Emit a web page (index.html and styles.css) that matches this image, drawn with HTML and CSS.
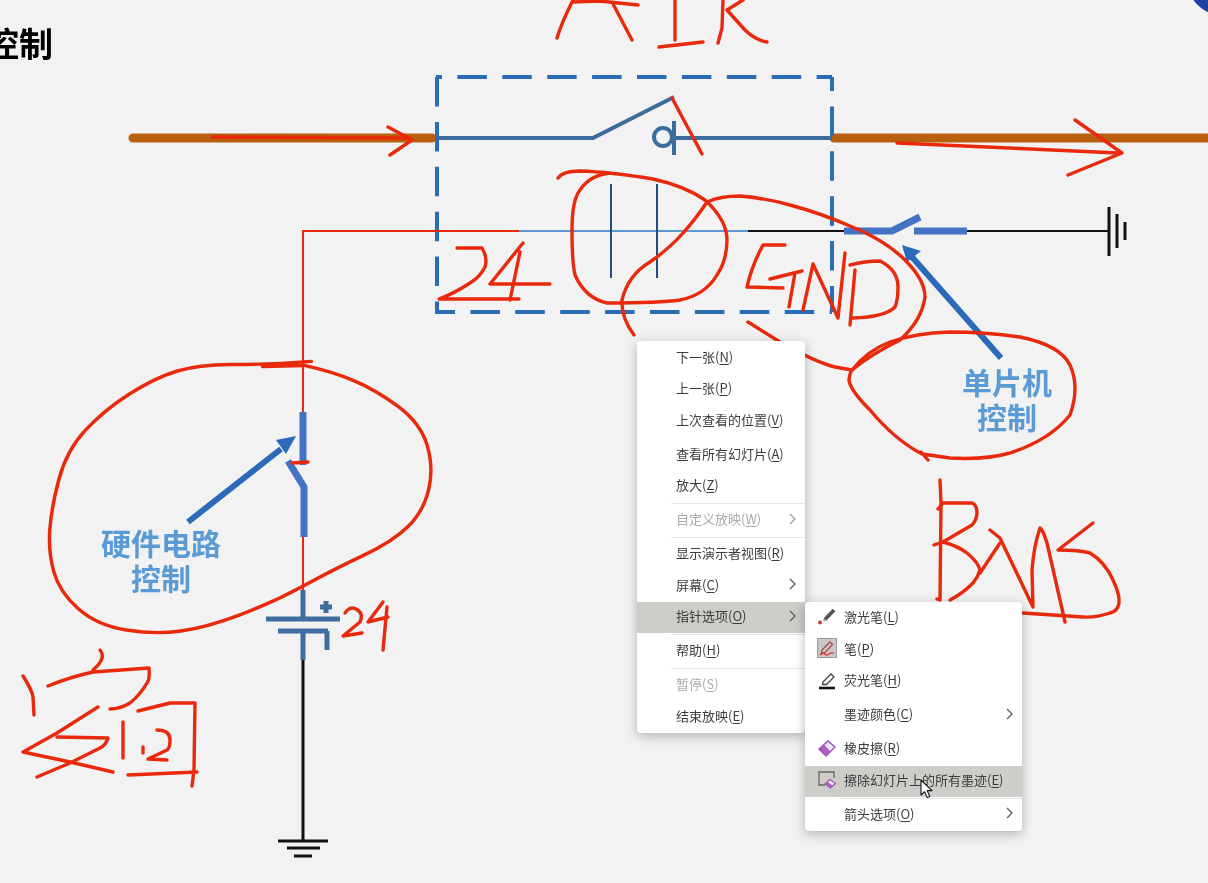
FILE: index.html
```html
<!DOCTYPE html>
<html lang="zh">
<head>
<meta charset="utf-8">
<title>控制</title>
<link rel="stylesheet" href="styles.css">
</head>
<body>
<main class="stage">
  <svg class="canvas" viewBox="0 0 1208 883" width="1208" height="883" aria-hidden="true">
    <circle class="corner" cx="1226" cy="-24" r="40.5"/>

    <path class="bus" d="M133 138H432M834 138H1208"/>
    <path class="dash dash-top" d="M436 77H832"/>
    <path class="dash dash-left" d="M437 77V312"/>
    <path class="dash dash-right" d="M832 77V312"/>
    <path class="dash dash-bottom" d="M435 312H832"/>

    <path class="main-wire" d="M436 138H593L674 97M674 138H832"/>
    <circle class="main-wire" cx="663" cy="137" r="9"/>
    <path class="main-wire thin-bar" d="M674 121V155"/>

    <path class="wire-blue" d="M519 231H748"/>
    <path class="plate" d="M611 184V278M657 184V278"/>
    <path class="wire-black" d="M748 231H845M967 231H1108"/>
    <path class="switch" d="M844 231H892L920 217M914 231H967"/>
    <path class="wire-black heavy" d="M1109 207V256M1117 214V248M1125 222V240"/>
    <path class="wire-red" d="M519 231H303V414M303 537V590"/>
    <path class="switch" d="M303 412V465M288 461L304 487V537"/>
    <path class="bat" d="M303 590V619M266 619H340M278 631H328M303 631V660M327 631V650M326 601V613M320 607H332"/>
    <path class="wire-black heavy" d="M303 660V841M278 841H328M287 848H320M294 856H312"/>

    <path class="pointer" d="M188 522L281 449"/>
    <path class="pointer-head" d="M296 436L276 440L286 454Z"/>
    <path class="pointer" d="M1001 358L912 257"/>
    <path class="pointer-head" d="M902 245L907 262L921 251Z"/>

    <g class="ink">
      <path d="M573 0C568 10 560 28 557 38M572 2L600 1L638 5M612 2L632 40"/>
      <path d="M675 0L675 40M659 47L703 42"/>
      <path d="M723 0L722 28L718 43M743 0L727 10L745 30Q755 40 767 42"/>

      <path d="M212 137L410 138M388 127L412 140L390 155"/>
      <path d="M897 143L1118 153M1075 120L1122 153L1068 175"/>
      <path d="M672 98L702 154"/>

      <path d="M457 248H482Q488 258 485 267Q480 277 470 283Q455 293 439 299H519"/>
      <path d="M523 243L490 284H550M520 252L510 300"/>

      <path d="M558 178Q563 171 580 171Q610 172 653 179Q685 186 705 200Q727 220 727 240Q727 260 717 275Q705 295 680 300Q660 303 607 303Q585 298 575 275Q572 262 572 230Q572 200 580 190Q590 175 610 173"/>
      <path d="M707 202Q720 196 740 196Q765 198 790 205Q820 213 850 226Q885 240 905 260Q925 280 925 297Q922 320 900 340Q870 355 852 370"/>
      <path d="M707 202Q695 220 683 233Q670 248 650 262Q628 275 622 300Q621 318 634 335"/>
      <path d="M748 322L780 342Q815 362 835 367L852 370"/>
      <path d="M852 370Q868 350 890 342Q915 333 950 332Q985 332 1020 337Q1060 345 1070 365Q1080 387 1070 415Q1050 440 1010 453Q985 460 950 458L922 454Q895 440 870 410Q850 390 849 380Q850 372 852 370M921 452L928 460"/>

      <path d="M785 245H763Q752 265 747 287L783 288M770 279L802 271M795 273L789 307"/>
      <path d="M803 310L813 264L838 318L845 253"/>
      <path d="M850 265Q865 261 880 261Q898 270 898 287Q898 300 895 307Q885 317 853 318M855 270L850 325"/>

      <path transform="translate(240 498) scale(1.02 1.012) translate(-240 -497)" d="M310 362L280 364Q260 365 230 365Q200 365 178.5 371.5Q157 378 132 394Q107 410 88.5 430Q70 450 62.5 478.5Q55 507 53.5 528.5Q52 550 57.5 570Q63 590 81.5 606.5Q100 623 128.5 627.5Q157 632 182 628.5Q207 625 240 612.5Q273 600 303 583.5Q333 567 361.5 553.5Q390 540 405 525Q420 510 425 488.5Q430 467 423.5 445Q417 423 395 406.5Q373 390 351.5 381Q330 372 303 366L262 367"/>
      <path d="M292 463L308 462"/>

      <path d="M345 613Q350 606 356 609Q364 613 360 622L343 636L362 633"/>
      <path d="M383 602L368 622L388 617M387 607L383 650"/>

      <path d="M23 676Q32 690 33 697L34 715"/>
      <path d="M100 650Q107 658 93 670"/>
      <path d="M48 686Q70 677 93 672L149 668Q150 680 147 683Q140 695 130 703Q120 709 110 709"/>
      <path d="M98 707L57 733L23 752L70 762L113 772"/>
      <path d="M57 737L108 738Q106 745 100 748L70 763L37 777"/>
      <path d="M123 722L123 758M143 747V753"/>
      <path d="M157 730Q170 730 170 740Q170 748 167 750L148 759L167 760"/>
      <path d="M138 711L170 703H195L194 770L192 786M128 775L197 772"/>

      <path d="M940 480L941 503L940 600L937 599"/>
      <path d="M938 509L943 503H972Q977 505 977 512Q977 520 972 525L943 542L934 545"/>
      <path d="M943 542Q958 546 967 553Q978 562 980 570Q978 577 973 583Q962 594 950 600"/>
      <path d="M990 530L1000 538L1033 607L1032 570Q1034 545 1040 528Q1043 530 1047 543L1065 622"/>
      <path d="M1000 543L980 573"/>
      <path d="M1093 523L1058 550Q1080 550 1090 553Q1105 562 1113 580Q1120 595 1119 603Q1118 611 1110 613Q1095 618 1083 617L1023 613"/>
    </g>
  </svg>

  <div class="title">控制</div>
  <div class="label label-hw">硬件电路<br>控制</div>
  <div class="label label-mcu">单片机<br>控制</div>

  <nav class="menu menu-main">
    <div class="item">下一张(<u>N</u>)</div>
    <div class="item">上一张(<u>P</u>)</div>
    <div class="item">上次查看的位置(<u>V</u>)</div>
    <div class="sep"></div>
    <div class="item">查看所有幻灯片(<u>A</u>)</div>
    <div class="item">放大(<u>Z</u>)</div>
    <div class="sep"></div>
    <div class="item off">自定义放映(<u>W</u>)<svg class="chev" viewBox="0 0 7 12"><path d="M1 1L6 6L1 11"/></svg></div>
    <div class="sep"></div>
    <div class="item">显示演示者视图(<u>R</u>)</div>
    <div class="item">屏幕(<u>C</u>)<svg class="chev" viewBox="0 0 7 12"><path d="M1 1L6 6L1 11"/></svg></div>
    <div class="item hot">指针选项(<u>O</u>)<svg class="chev" viewBox="0 0 7 12"><path d="M1 1L6 6L1 11"/></svg></div>
    <div class="sep"></div>
    <div class="item">帮助(<u>H</u>)</div>
    <div class="sep"></div>
    <div class="item off">暂停(<u>S</u>)</div>
    <div class="item">结束放映(<u>E</u>)</div>
  </nav>

  <nav class="menu menu-sub">
    <div class="item">
      <svg class="ico" viewBox="0 0 20 20"><circle cx="3" cy="15.5" r="1.9" fill="#c8372d"/><path d="M8 12.5L17 3" stroke="#555" stroke-width="3.8" fill="none"/><path d="M6.5 14L8 12.5" stroke="#999" stroke-width="1.8"/></svg>
      激光笔(<u>L</u>)
    </div>
    <div class="item">
      <svg class="ico" viewBox="0 0 20 20"><rect x=".5" y=".5" width="19" height="19" fill="#c9c7c5" stroke="#9a9a9a"/><path d="M5 12L13 4L15.5 6.5L8 14.5L4.5 15.5Z" fill="none" stroke="#a84a4c" stroke-width="1.3"/><path d="M3 17Q7 14 8 16T12 16T17 15.5" fill="none" stroke="#d8353a" stroke-width="1.4"/></svg>
      笔(<u>P</u>)
    </div>
    <div class="item">
      <svg class="ico" viewBox="0 0 20 20"><path d="M6 12L14 4L17 7L9.5 14.5H5.5Z" fill="none" stroke="#444" stroke-width="1.3"/><path d="M2 18H18" stroke="#111" stroke-width="2.6"/></svg>
      荧光笔(<u>H</u>)
    </div>
    <div class="sep"></div>
    <div class="item"><span class="ico"></span>墨迹颜色(<u>C</u>)<svg class="chev" viewBox="0 0 7 12"><path d="M1 1L6 6L1 11"/></svg></div>
    <div class="sep"></div>
    <div class="item">
      <svg class="ico" viewBox="0 0 20 20"><path d="M2 11L11 3L18 9L9 18Z" fill="#f0e2f4" stroke="#9c4fb5" stroke-width="1.4"/><path d="M2 11L7 6.5L13 13L9 18Z" fill="#a85fbe"/></svg>
      橡皮擦(<u>R</u>)
    </div>
    <div class="item hot">
      <svg class="ico" viewBox="0 0 20 20"><path d="M8 16H2V3H17V9" fill="none" stroke="#666" stroke-width="1.3"/><path d="M8 15L13 10.5L18.5 14.5L13.5 19Z" fill="#f4e8f6" stroke="#9c4fb5" stroke-width="1.2"/><path d="M8 15L10.5 12.8L16 17L13.5 19Z" fill="#a85fbe"/></svg>
      擦除幻灯片上的所有墨迹(<u>E</u>)
    </div>
    <div class="sep"></div>
    <div class="item"><span class="ico"></span>箭头选项(<u>O</u>)<svg class="chev" viewBox="0 0 7 12"><path d="M1 1L6 6L1 11"/></svg></div>
  </nav>

  <svg class="cursor" viewBox="0 0 14 20" aria-hidden="true"><path d="M1 1V16L4.6 12.6L7.2 18.6L9.8 17.5L7.2 11.6H12Z"/></svg>
</main>
</body>
</html>
```

FILE: styles.css
```css
* { box-sizing: border-box; }

html, body {
  margin: 0;
  width: 1208px;
  height: 883px;
  overflow: hidden;
  background: #f2f2f2;
}

.stage {
  position: relative;
  width: 1208px;
  height: 883px;
  overflow: hidden;
  background: #f2f2f2;
  font-family: "Noto Sans CJK SC", "Noto Sans", sans-serif;
  filter: blur(0.4px);
}

.canvas {
  position: absolute;
  left: 0;
  top: 0;
  display: block;
}

.canvas path, .canvas circle { fill: none; }

.canvas .corner { fill: #1f40a3; }

.bus { stroke: #b9600f; stroke-width: 9; stroke-linecap: round; }

.dash { stroke: #2a6cb5; stroke-width: 4; stroke-dasharray: 29.5 15.4; }
.dash-top { stroke-dashoffset: 23.5; }
.dash-left { stroke-dashoffset: 0; }
.dash-right { stroke-dashoffset: 15.5; }
.dash-bottom { stroke-dashoffset: 9.5; }

.main-wire { stroke: #3d6c9e; stroke-width: 4; }
.wire-blue { stroke: #5f97d2; stroke-width: 2; }
.plate { stroke: #1f4e85; stroke-width: 2; }
.wire-black { stroke: #111; stroke-width: 2; }
.wire-black.heavy { stroke-width: 3; }
.wire-red { stroke: #e8290c; stroke-width: 2; }
.switch { stroke: #4472c4; stroke-width: 7; }
.bat { stroke: #3d6c9e; stroke-width: 5; }

.pointer { stroke: #2a6ab8; stroke-width: 6; }
.canvas .pointer-head { fill: #2a6ab8; }

.ink path {
  stroke: #e8290c;
  stroke-width: 3.4;
  stroke-linecap: round;
  stroke-linejoin: round;
}

.title {
  position: absolute;
  left: -15px;
  top: 19px;
  font-size: 34px;
  line-height: 48px;
  font-weight: 700;
  color: #000;
  white-space: nowrap;
}

.label {
  position: absolute;
  width: 140px;
  text-align: center;
  font-size: 30px;
  line-height: 35px;
  font-weight: 700;
  color: #5b9bd5;
}
.label-hw { left: 91px; top: 525px; }
.label-mcu { left: 937px; top: 364px; }

.menu {
  position: absolute;
  display: flex;
  flex-direction: column;
  padding-top: 1.25px;
  background: #fff;
  border-radius: 4px;
  box-shadow: 0 3px 12px rgba(0, 0, 0, 0.28);
  font-size: 13px;
  color: #3c3c3c;
}
.menu-main { left: 637px; top: 341px; width: 168px; height: 392px; }
.menu-sub { left: 805px; top: 602px; width: 217px; height: 229px; }

.item {
  display: flex;
  align-items: center;
  height: 31.5px;
  padding-left: 39px;
  padding-bottom: 4px;
  white-space: nowrap;
}
.menu-sub .item { padding-left: 12px; }

.item u { text-underline-offset: 2px; text-decoration-thickness: 1px; }
.item.off { color: #aaa; }
.item.hot { background: #cfcdca; }

.sep {
  height: 2.5px;
  margin-left: 34px;
  background: linear-gradient(#fff 0, #fff 30%, #e6e6e6 30%, #e6e6e6 70%, #fff 70%);
}

.ico {
  flex: none;
  display: block;
  width: 20px;
  height: 20px;
  margin-right: 7px;
}

.chev {
  flex: none;
  width: 7px;
  height: 12px;
  margin-left: auto;
  margin-right: 9px;
}
.chev path { fill: none; stroke: #555; stroke-width: 1.2; }
.off .chev path { stroke: #999; }

.cursor {
  position: absolute;
  left: 920px;
  top: 779px;
  width: 14px;
  height: 20px;
}
.cursor path { fill: #fff; stroke: #111; stroke-width: 1.1; stroke-linejoin: round; }
```
